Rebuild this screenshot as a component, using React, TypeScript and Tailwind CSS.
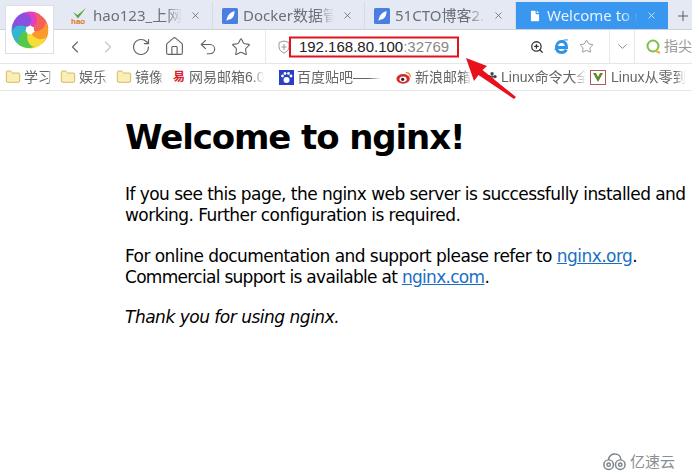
import type { ReactNode } from "react";
import { ChevronLeft, ChevronRight, RotateCw, Home, Undo2, Star, ChevronDown, Plus, X, File, ZoomIn, Folder } from "lucide-react";

const CJK = "font-['Liberation_Sans','Noto_Sans_CJK_SC',sans-serif]";

function Leaf() {
  return (
    <svg width="16" height="16" viewBox="0 0 16 16" className="shrink-0">
      <rect width="16" height="16" rx="1.5" fill="#4a7ee0" />
      <path d="M4.5 13 C5 8 7.5 4.5 12.5 3 C12.5 8 10.5 11.5 6 11.8 L4.5 13Z" fill="#fff" />
    </svg>
  );
}

function Hao() {
  return (
    <svg width="17" height="17" viewBox="0 0 17 17" className="shrink-0">
      <path d="M2 5 L6.5 8 L15 1 L7 11.5 Z" fill="#5ea83a" />
      <text x="0" y="16.5" fontSize="8" fontWeight="700" fill="#e2762b" fontFamily="Liberation Sans">hao</text>
    </svg>
  );
}

function Tab({ icon, label, width, pad, active }: { icon: ReactNode; label: string; width: string; pad: string; active?: boolean }) {
  return (
    <div className={`${width} ${pad} ${active ? "bg-[#3a97f0] text-[#e6f2fe]" : "text-[#6b6f76] border-r border-[#d6dbe4]"} h-full flex items-center pr-[11px] gap-[5px] text-[15px] overflow-hidden font-['Noto_Sans','Noto_Sans_CJK_SC',sans-serif]`}>
      {icon}
      <span className="flex-1 min-w-0 mr-[3px] whitespace-nowrap overflow-hidden [mask-image:linear-gradient(90deg,#000_82%,transparent)]">{label}</span>
      <X size={11} strokeWidth={1.5} className={active ? "text-white shrink-0" : "text-[#555] shrink-0"} />
    </div>
  );
}

function Bookmark({ icon, label, width }: { icon: ReactNode; label: string; width: string }) {
  return (
    <div className={`${width} flex items-center gap-[3px] shrink-0 overflow-hidden pr-[4px]`}>
      {icon}
      <span className="whitespace-nowrap overflow-hidden [mask-image:linear-gradient(90deg,#000_85%,transparent)]">{label}</span>
    </div>
  );
}

function FolderIcon() {
  return <Folder size={16} strokeWidth={1.2} className="text-[#c9a84a] fill-[#fbeeb5] shrink-0" />;
}

function Logo() {
  const colors = ["#e03fc0", "#f4605a", "#fb9a2a", "#f8dc3a", "#55c84a", "#34b5d0", "#8a50e0"];
  return (
    <svg width="40" height="40" viewBox="-20 -20 40 40">
      {colors.map((c, i) => (
        <path
          key={c}
          d="M0 -3 C7 -5 10 -12 4 -18 C-4 -20 -12 -16 -15 -9 C-9 -12 -4 -9 0 -3Z"
          fill={c}
          transform={`rotate(${(i * 360) / 7 + 20})`}
        />
      ))}
      <circle r="4" fill="#fff" />
    </svg>
  );
}

export default function App() {
  return (
    <div className={`relative w-[692px] h-[474px] bg-white overflow-hidden ${CJK}`}>
      <div className="absolute left-[5px] top-[5px] w-[49px] h-[49px] bg-white border border-[#dcdfe4] flex items-center justify-center z-10">
        <Logo />
      </div>

      <div className="h-[30px] bg-[#e4e9f3] border-b border-[#cdd2da] flex items-stretch pl-[67px] pt-[2px]">
        <Tab icon={<Hao />} label="hao123_上网从这里开始" width="w-[146px]" pad="pl-[4px]" />
        <Tab icon={<Leaf />} label="Docker数据管理" width="w-[152px]" pad="pl-[9px]" />
        <Tab icon={<Leaf />} label="51CTO博客2.0" width="w-[151px]" pad="pl-[9px]" />
        <Tab active icon={<File size={14} className="text-[#3a97f0] fill-white shrink-0" />} label="Welcome to nginx" width="w-[152px]" pad="pl-[12px]" />
        <div className="flex-1 flex items-center justify-center pl-[5px]">
          <Plus size={16} strokeWidth={1.4} className="text-[#555]" />
        </div>
      </div>

      <div className="h-[34px] bg-white border-b border-[#e6e6e6] flex items-center pl-[66px]">
        <div className="w-[199px] flex items-center gap-[13px] text-[#5f6368]">
          <ChevronLeft size={20} strokeWidth={1.3} className="-ml-[1px]" />
          <ChevronRight size={20} strokeWidth={1.3} className="text-[#c4c4c4]" />
          <RotateCw size={20} strokeWidth={1.4} />
          <Home size={21} strokeWidth={1.3} />
          <Undo2 size={20} strokeWidth={1.3} />
          <Star size={20} strokeWidth={1.3} />
        </div>
        <div className="w-[344px] h-full border-l border-[#e9e9e9] flex items-center pl-[12px]">
          <svg width="12" height="14" viewBox="0 0 12 14" className="shrink-0 text-[#999]">
            <path d="M6 1 L11 2.5 V7 C11 10 8.5 12 6 13 C3.5 12 1 10 1 7 V2.5 Z M6 4 V10 M3.5 7 H8.5" fill="none" stroke="currentColor" />
          </svg>
          <div className="ml-[-1px] w-[170px] h-[21px] border-2 border-[#e2121c] flex items-center justify-center text-[15px] text-[#222] bg-white translate-y-[0.5px]">
            192.168.80.100<span className="text-[#888]">:32769</span>
          </div>
          <ZoomIn size={14} strokeWidth={2.2} className="text-[#333] ml-[71px]" />
          <svg width="17" height="17" viewBox="0 0 17 17" className="ml-[9px]">
            <path d="M3.5 9.5 H13.5 C13.5 5.5 11.5 3.5 8.5 3.5 C5.5 3.5 3.5 6 3.5 9 C3.5 12.5 5.5 14.5 8.5 14.5 C10.5 14.5 12.5 13.5 13.2 11.5" fill="none" stroke="#2f96e6" strokeWidth="3" />
            <path d="M2 12 C3 5 9 1 15 2" fill="none" stroke="#2f96e6" strokeWidth="1" />
          </svg>
          <Star size={15} strokeWidth={1.2} className="text-[#777] ml-[9px]" />
        </div>
        <div className="h-full border-l border-[#e9e9e9] w-[25px] flex items-center justify-center">
          <ChevronDown size={15} strokeWidth={1.2} className="text-[#666]" />
        </div>
        <div className="h-full flex-1 border-l border-[#e9e9e9] flex items-center pl-[11px] gap-[3px] text-[14px] text-[#999] whitespace-nowrap overflow-hidden">
          <svg width="15" height="15" viewBox="0 0 15 15" className="shrink-0">
            <circle cx="7" cy="7" r="5.5" fill="none" stroke="#7cc04a" strokeWidth="2" />
            <path d="M10 12 L14 14" stroke="#f0b030" strokeWidth="2" />
          </svg>
          指尖
        </div>
      </div>

      <div className="h-[27px] bg-white border-b border-[#e8e8e8] flex items-center pl-[5px] text-[14px] text-[#666] overflow-hidden">
        <Bookmark icon={<FolderIcon />} label="学习" width="w-[55px]" />
        <Bookmark icon={<FolderIcon />} label="娱乐" width="w-[56px]" />
        <Bookmark icon={<FolderIcon />} label="镜像" width="w-[56px]" />
        <Bookmark icon={<span className="w-[14px] text-[12px] leading-[14px] font-bold text-[#d9202a] shrink-0 text-center">易</span>} label="网易邮箱6.0" width="w-[107px]" />
        <Bookmark
          icon={
            <svg width="15" height="15" viewBox="0 0 15 15" className="shrink-0">
              <rect width="15" height="15" fill="#2b3fc4" />
              <circle cx="7.5" cy="10" r="3" fill="#fff" />
              <circle cx="3.5" cy="6" r="1.4" fill="#fff" />
              <circle cx="6" cy="3.5" r="1.4" fill="#fff" />
              <circle cx="9.5" cy="3.5" r="1.4" fill="#fff" />
              <circle cx="12" cy="6" r="1.4" fill="#fff" />
            </svg>
          }
          label="百度贴吧——"
          width="w-[117px]"
        />
        <Bookmark
          icon={
            <svg width="16" height="15" viewBox="0 0 18 15" className="shrink-0">
              <ellipse cx="8" cy="9" rx="7.5" ry="5.5" fill="#d9282f" />
              <ellipse cx="8" cy="9.5" rx="4" ry="3" fill="#fff" />
              <circle cx="7.5" cy="9.5" r="1.8" fill="#222" />
              <path d="M11 2 C14 1.5 16.5 4 16 7" fill="none" stroke="#e88a2a" strokeWidth="1.5" />
            </svg>
          }
          label="新浪邮箱"
          width="w-[89px]"
        />
        <Bookmark icon={<span className="w-[13px] text-[12px] text-[#444] text-center shrink-0">✤</span>} label="Linux命令大全" width="w-[105px]" />
        <Bookmark
          icon={
            <svg width="16" height="15" viewBox="0 0 16 15" className="shrink-0 mr-[2px]">
              <rect x="0.5" y="0.5" width="15" height="14" fill="#fff" stroke="#b05a5a" />
              <path d="M3 3 L8 12 L13 3 H10 L8 7 L6 3 Z" fill="#5d8a2a" />
            </svg>
          }
          label="Linux从零到精通"
          width="w-[100px]"
        />
      </div>

      <main className="pl-[125px] pt-[25px] text-[#000] font-['DejaVu_Sans',sans-serif] text-[17px] leading-[21px] tracking-[-0.55px]">
        <h1 className="text-[34px] leading-[42px] font-bold tracking-[-1.1px]">Welcome to nginx!</h1>
        <p className="mt-[26px] whitespace-nowrap">If you see this page, the nginx web server is successfully installed and<br />working. Further configuration is required.</p>
        <p className="mt-[20px] whitespace-nowrap">
          For online documentation and support please refer to <a className="text-[#1a6fc4] underline">nginx.org</a>.<br />
          <span className="tracking-[-0.7px]">Commercial support is available at <a className="text-[#1a6fc4] underline">nginx.com</a>.</span>
        </p>
        <p className="mt-[19px] italic tracking-[-0.49px]">Thank you for using nginx.</p>
      </main>

      <svg className="absolute left-[463px] top-[56px]" width="54" height="46" viewBox="0 0 54 46">
        <path d="M3 2 L24 10 L19.5 14 L53 41 L51 43 L15.5 19 L11 25 Z" fill="#e8101c" />
      </svg>

      <div className="absolute left-[602px] top-[451px] flex items-center gap-[2px] text-[15px] text-[#8a8f94]">
        <svg width="26" height="18" viewBox="0 0 24 17" fill="none" stroke="#7d8388" strokeWidth="1.4">
          <circle cx="6" cy="11" r="4.5" />
          <circle cx="6" cy="11" r="1.6" />
          <circle cx="17" cy="11" r="4.5" />
          <circle cx="17" cy="11" r="1.6" />
          <path d="M6 6.5 C6 2 10 0.8 12 1 C15 1 17.5 3 17.5 6.5" />
        </svg>
        亿速云
      </div>
    </div>
  );
}
